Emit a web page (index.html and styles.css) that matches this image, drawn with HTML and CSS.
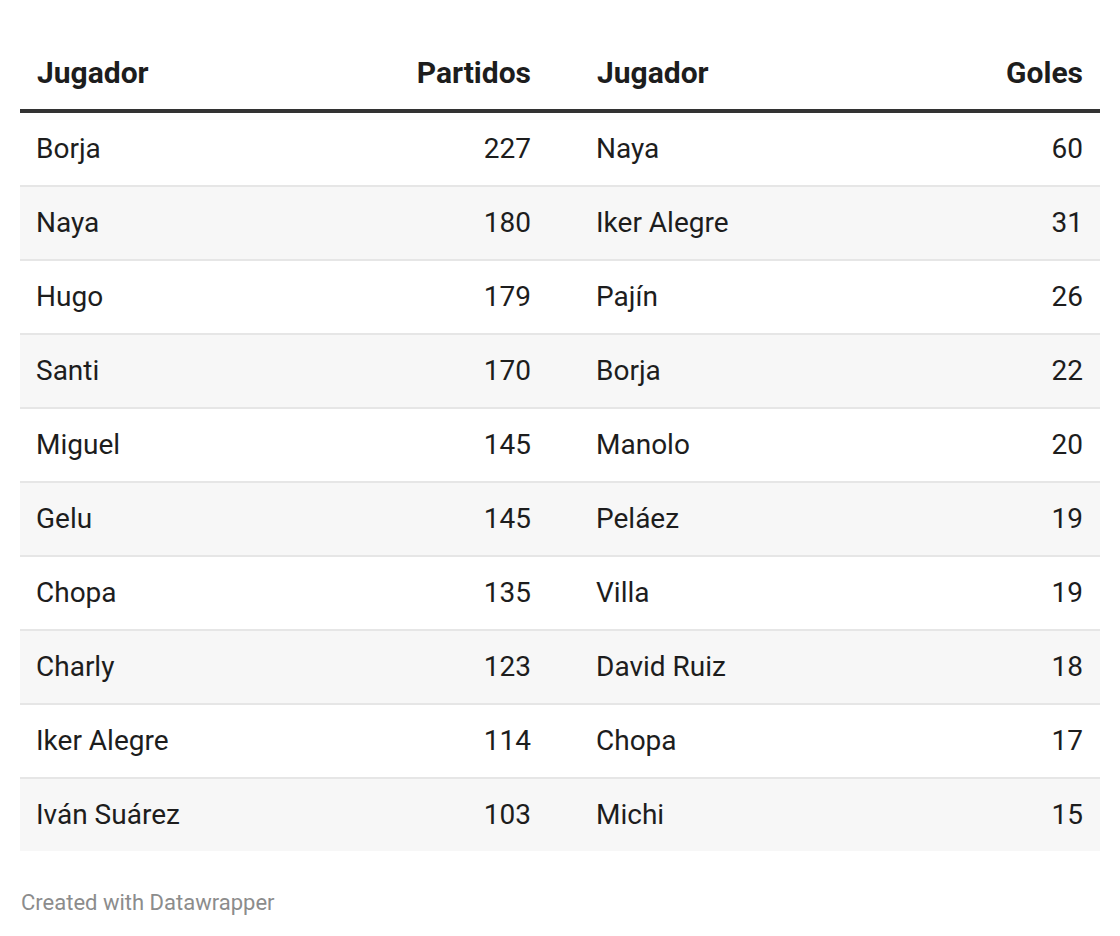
FILE: index.html
```html
<!DOCTYPE html>
<html lang="es">
<head>
<meta charset="utf-8">
<title>Tabla</title>
<link rel="stylesheet" href="styles.css">
</head>
<body>
<div class="chart">
  <table class="dw-table">
    <colgroup>
      <col class="c1"><col class="c2"><col class="c3"><col class="c4">
    </colgroup>
    <thead>
      <tr>
        <th class="name first">Jugador</th>
        <th class="num">Partidos</th>
        <th class="name second">Jugador</th>
        <th class="num">Goles</th>
      </tr>
    </thead>
    <tbody>
      <tr><td class="name first">Borja</td><td class="num">227</td><td class="name second">Naya</td><td class="num">60</td></tr>
      <tr><td class="name first">Naya</td><td class="num">180</td><td class="name second">Iker Alegre</td><td class="num">31</td></tr>
      <tr><td class="name first">Hugo</td><td class="num">179</td><td class="name second">Pajín</td><td class="num">26</td></tr>
      <tr><td class="name first">Santi</td><td class="num">170</td><td class="name second">Borja</td><td class="num">22</td></tr>
      <tr><td class="name first">Miguel</td><td class="num">145</td><td class="name second">Manolo</td><td class="num">20</td></tr>
      <tr><td class="name first">Gelu</td><td class="num">145</td><td class="name second">Peláez</td><td class="num">19</td></tr>
      <tr><td class="name first">Chopa</td><td class="num">135</td><td class="name second">Villa</td><td class="num">19</td></tr>
      <tr><td class="name first">Charly</td><td class="num">123</td><td class="name second">David Ruiz</td><td class="num">18</td></tr>
      <tr><td class="name first">Iker Alegre</td><td class="num">114</td><td class="name second">Chopa</td><td class="num">17</td></tr>
      <tr><td class="name first">Iván Suárez</td><td class="num">103</td><td class="name second">Michi</td><td class="num">15</td></tr>
    </tbody>
  </table>
  <div class="footer">Created with Datawrapper</div>
</div>
</body>
</html>
```
FILE: styles.css
```css
html, body {
  margin: 0;
  padding: 0;
  background: #ffffff;
}
body {
  font-family: Roboto, "Liberation Sans", sans-serif;
  color: #1d1d1d;
}
.chart {
  padding: 43px 20px 0 20px;
}
.dw-table {
  width: 1080px;
  border-collapse: collapse;
  table-layout: fixed;
}
.c1 { width: 280px; }
.c2 { width: 248px; }
.c3 { width: 272px; }
.c4 { width: 280px; }

.dw-table th {
  font-size: 30px;
  font-weight: 700;
  height: 68px;
  line-height: 30px;
  vertical-align: top;
  padding: 15px 17px 0 17px;
  box-sizing: border-box;
  border-bottom: 4px solid #333333;
  color: #1d1d1d;
}
.dw-table th.second { padding-left: 49px; }
.dw-table td {
  font-size: 28px;
  font-weight: 400;
  height: 72px;
  line-height: 72px;
  padding: 0 17px 0 16px;
  vertical-align: middle;
  white-space: nowrap;
  border-bottom: 2px solid #e6e6e6;
}
.dw-table td.second { padding-left: 48px; }
.dw-table tbody tr:nth-child(even) td {
  background: #f7f7f7;
}
.dw-table tbody tr:last-child td {
  border-bottom: none;
}
.name { text-align: left; }
.num { text-align: right; }

.footer {
  margin-top: 39px;
  padding-left: 1px;
  font-size: 22px;
  line-height: 26px;
  color: #8c8c8c;
}
```
